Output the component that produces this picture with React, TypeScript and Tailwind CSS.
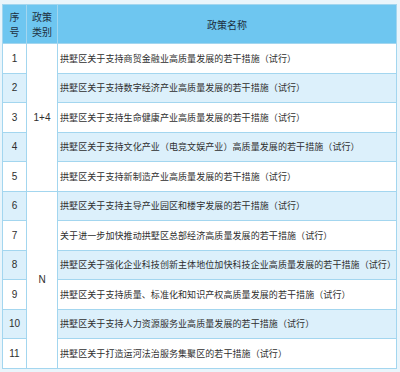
import React from "react";

const rows = [
  "拱墅区关于支持商贸金融业高质量发展的若干措施（试行）",
  "拱墅区关于支持数字经济产业高质量发展的若干措施（试行）",
  "拱墅区关于支持生命健康产业高质量发展的若干措施（试行）",
  "拱墅区关于支持文化产业（电竞文娱产业）高质量发展的若干措施（试行）",
  "拱墅区关于支持新制造产业高质量发展的若干措施（试行）",
  "拱墅区关于支持主导产业园区和楼宇发展的若干措施（试行）",
  "关于进一步加快推动拱墅区总部经济高质量发展的若干措施（试行）",
  "拱墅区关于强化企业科技创新主体地位加快科技企业高质量发展的若干措施（试行）",
  "拱墅区关于支持质量、标准化和知识产权高质量发展的若干措施（试行）",
  "拱墅区关于支持人力资源服务业高质量发展的若干措施（试行）",
  "拱墅区关于打造运河法治服务集聚区的若干措施（试行）",
];

export default function App() {
  const font = { fontFamily: '"Noto Sans CJK SC", "Noto Sans", sans-serif' };
  const num = { fontFamily: '"Liberation Sans", Arial, sans-serif' };
  return (
    <div className="w-[400px] h-[372px] bg-[#eaf5fb] pt-[4px] pl-[2px]" style={font}>
      <table className="w-[395px] border-collapse table-fixed text-[#2e2e2e]">
        <colgroup>
          <col className="w-[24px]" />
          <col className="w-[31px]" />
          <col />
        </colgroup>
        <thead>
          <tr className="h-[39px] bg-[#6ec6f0] text-[10px] leading-[15px] text-[#1d2f3f]">
            <th className="border border-[#a3d6ef] font-normal">
              <div>序</div>
              <div>号</div>
            </th>
            <th className="border border-[#a3d6ef] font-normal">
              <div>政策</div>
              <div>类别</div>
            </th>
            <th className="border border-[#a3d6ef] font-normal">政策名称</th>
          </tr>
        </thead>
        <tbody>
          {rows.map((t, i) => {
            const bg = i % 2 === 1 ? "bg-[#dcf0fb]" : "bg-white";
            return (
              <tr key={i} className="h-[29.5px]">
                <td className={`border border-[#a3d6ef] text-center text-[10px] ${bg}`} style={num}>
                  {i + 1}
                </td>
                {i === 0 && (
                  <td rowSpan={5} className="border border-[#a3d6ef] bg-white text-center text-[10px]" style={num}>
                    1+4
                  </td>
                )}
                {i === 5 && (
                  <td rowSpan={6} className="border border-[#a3d6ef] bg-white text-center text-[10px]" style={num}>
                    N
                  </td>
                )}
                <td className={`border border-[#a3d6ef] pl-[2px] text-[9px] tracking-[0.08px] whitespace-nowrap ${bg}`}>
                  {t}
                </td>
              </tr>
            );
          })}
        </tbody>
      </table>
    </div>
  );
}
